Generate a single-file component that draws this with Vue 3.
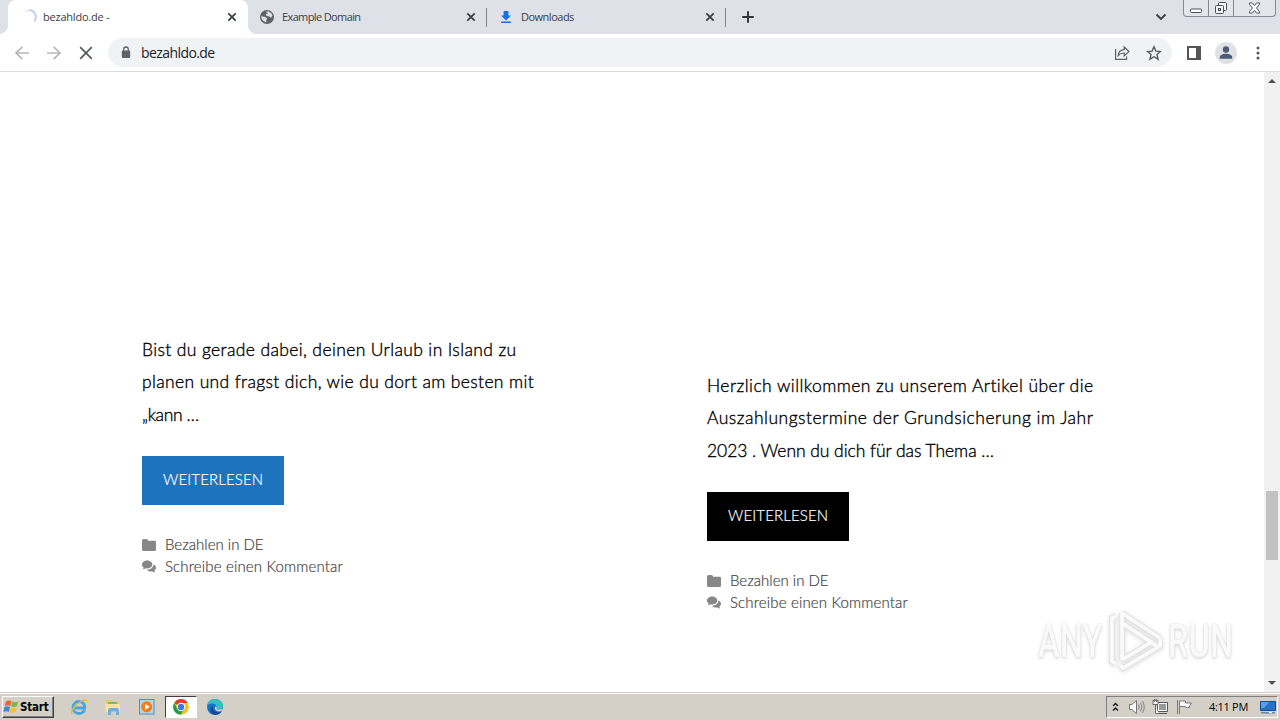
<template>
  <div class="screen">
    <header class="tabstrip">
      <div class="tab active">
        <svg class="favicon" viewBox="0 0 16 16">
          <path d="M8 1.200a6.800 6.800 0 0 1 5.200 11.200" fill="none" stroke="#b9ccf5" stroke-width="1.800" />
          <path d="M8 1.200a6.800 6.800 0 0 0-4 1.300" fill="none" stroke="#e4ebfa" stroke-width="1.500" />
        </svg>
        <span class="tab-title loading">bezahldo.de -</span>
        <svg class="close" viewBox="0 0 10 10"><path d="M1.300 1.300l7.400 7.400M8.700 1.300L1.300 8.700" /></svg>
      </div>
      <div class="tab">
        <svg class="favicon globe" viewBox="0 0 16 16">
          <circle cx="8" cy="8" r="7" fill="#5f6368" />
          <path d="M2.200 7.300l4.200.7 1.800 1.700-1 1.300.2 2.200C4.400 13 2.300 10.600 2.200 7.300zM6.500 2.800l3.300-.4 2.600 1.800 1 2.500-1.500 2-1.500-1.200-3.200-.7-.2-1.700 2-.7z" fill="#dee1e8" />
        </svg>
        <span class="tab-title example">Example Domain</span>
        <svg class="close" viewBox="0 0 10 10"><path d="M1.300 1.300l7.400 7.400M8.700 1.300L1.300 8.700" /></svg>
      </div>
      <div class="tab bordered">
        <svg class="favicon globe" viewBox="0 0 16 16">
          <path d="M5.600 2h4.800v4.500H13L8 11.500 3 6.500h2.600zM3.200 12.500h9.600V14H3.200z" fill="#1a6fe0" />
        </svg>
        <span class="tab-title downloads">Downloads</span>
        <svg class="close" viewBox="0 0 10 10"><path d="M1.300 1.300l7.400 7.400M8.700 1.300L1.300 8.700" /></svg>
      </div>
      <div class="new-tab">
        <svg width="14" height="14" viewBox="0 0 14 14"><path d="M7 1.200v11.600M1.200 7h11.600" stroke="#30333a" stroke-width="1.900" /></svg>
      </div>
      <svg class="tab-search" width="12" height="8" viewBox="0 0 12 8"><path d="M1.500 1.500L6 6l4.500-4.500" fill="none" stroke="#3c4043" stroke-width="1.900" /></svg>
      <div class="window-buttons">
        <span class="min"><svg width="14" height="6" viewBox="0 0 14 6"><rect x="1.500" y="1" width="11" height="3.500" rx="1" fill="#fff" stroke="#4c5058" /></svg></span>
        <span class="max">
          <svg width="14" height="14" viewBox="0 0 14 14" fill="#f3f4f7" stroke="#4c5058">
            <rect x="4.500" y="1.500" width="8" height="8" rx="1" />
            <rect x="1.500" y="4.500" width="8" height="8" rx="1" />
            <rect x="4.500" y="7.500" width="2" height="2" />
          </svg>
        </span>
        <span class="shut">
          <svg width="13" height="12" viewBox="0 0 13 12"><path d="M1.500 1h3l2 2.500L8.500 1h3v1.500L8.500 6l3 3.500V11h-3l-2-2.500L4.500 11h-3V9.500l3-3.500-3-3.500z" fill="#fff" stroke="#4c5058" /></svg>
        </span>
      </div>
    </header>

    <div class="toolbar">
      <div class="nav-buttons">
        <svg width="16" height="16" viewBox="0 0 16 16"><path d="M15 8H2.500M8.300 1.800L2 8l6.300 6.200" stroke="#b4b6b9" /></svg>
        <svg width="16" height="16" viewBox="0 0 16 16"><path d="M1 8h12.500M7.700 1.800L14 8l-6.300 6.200" stroke="#b4b6b9" /></svg>
        <svg width="16" height="16" viewBox="0 0 16 16"><path d="M2.200 2.200l11.600 11.600M13.800 2.200L2.200 13.800" stroke="#55585c" /></svg>
      </div>
      <div class="omnibox">
        <svg class="lock" width="10" height="13" viewBox="0 0 10 13">
          <rect x="0.800" y="4.500" width="8.400" height="7.500" rx="1" fill="#5f6368" />
          <path d="M2.700 5V3.300a2.300 2.300 0 0 1 4.600 0V5" fill="none" stroke="#5f6368" stroke-width="1.300" />
        </svg>
        <span class="url">bezahldo.de</span>
        <svg class="share" width="16" height="16" viewBox="0 0 16 16" fill="none" stroke="#5f6368" stroke-width="1.200">
          <path d="M1.600 4v10.400h11v-3" />
          <path d="M4.200 10.500c.3-3.700 2.500-5.600 6-5.800V2L15 6.500l-4.800 4.300V8C7.600 7.900 5.700 8.700 4.200 10.500z" />
        </svg>
        <svg class="star" width="16" height="16" viewBox="0 0 16 16"><path d="M8 1.800l1.900 4.300 4.600.4-3.500 3.100 1.100 4.600L8 11.700l-4.100 2.500L5 9.600 1.500 6.500l4.600-.4z" fill="none" stroke="#55595e" stroke-width="1.400" /></svg>
      </div>
      <svg class="panel" width="14" height="14" viewBox="0 0 14 14"><path d="M0 0h14v14H0zM2 2v10h7V2z" fill="#55555a" fill-rule="evenodd" /></svg>
      <svg class="avatar" width="22" height="22" viewBox="0 0 22 22">
        <circle cx="11" cy="11" r="11" fill="#dfe1e5" />
        <circle cx="11" cy="7.500" r="3.200" fill="#4c5a75" />
        <path d="M4.800 16.800v-1.500c0-2.200 3-3.500 6.200-3.500s6.200 1.300 6.200 3.500v1.500z" fill="#4c5a75" />
      </svg>
      <svg class="dots" width="4" height="14" viewBox="0 0 4 14" fill="#55585c"><circle cx="2" cy="2" r="1.500" /><circle cx="2" cy="7" r="1.500" /><circle cx="2" cy="12" r="1.500" /></svg>
    </div>

    <main class="viewport">
      <div class="page">
        <article v-for="post in posts" :key="post.id" class="post" :class="post.id">
          <p class="excerpt">
            <span v-for="line in post.lines" :key="line.text" class="line" :style="{ letterSpacing: line.spacing + 'px' }">{{ line.text }}</span>
          </p>
          <a class="read-more">WEITERLESEN</a>
          <div class="meta">
            <svg width="14" height="12" viewBox="0 0 14 12"><path d="M0 1.500Q0 0 1.500 0h3Q6 0 6 1.700h6.500Q14 1.700 14 3v7.500q0 1.500-1.500 1.500h-11Q0 12 0 10.500z" /></svg>
            <span class="category">Bezahlen in DE</span>
          </div>
          <div class="meta">
            <svg width="14" height="14" viewBox="0 0 14 14">
              <path d="M5.200.5C8.100.5 10.300 2.200 10.300 4.500S8 8.400 5.200 8.400l-1.500-.2C2.800 9 1.600 9.300.7 9.300c.6-.5 1-1.100 1-1.800C.6 6.800 0 5.700 0 4.500 0 2.200 2.300.5 5.200.5z" />
              <path d="M11.300 4.500C13 5.100 14 6.300 14 7.800c0 1.200-.6 2.100-1.600 2.800 0 .9.400 1.500 1 2-1 0-2.100-.4-3-1.100-2.200.3-4.400-.4-5.400-1.800 3.500 0 6.300-2 6.300-5.200z" />
            </svg>
            <span class="comment">Schreibe einen Kommentar</span>
          </div>
        </article>
        <div class="watermark">
          <span class="any">ANY</span>
          <svg width="60" height="64" viewBox="0 0 60 64" fill="none">
            <path d="M9 8L5 10V53l4 3M15 5v47M15 5l38 25M15 15l35 23M53 30v8L16 60l-3-3M15 52l31-19" stroke="#e3e3e3" stroke-width="6" />
            <path d="M9 8L5 10V53l4 3M15 5v47M15 5l38 25M15 15l35 23M53 30v8L16 60l-3-3M15 52l31-19" stroke="#fbfbfb" stroke-width="3.500" />
          </svg>
          <span class="run">RUN</span>
        </div>
      </div>
      <div class="scrollbar">
        <i class="arrow up"></i>
        <i class="thumb"></i>
        <i class="arrow down"></i>
      </div>
    </main>

    <footer class="taskbar">
      <button class="start">
        <svg width="17" height="16" viewBox="0 0 17 16">
          <path d="M3 2.500C5 1 7 1.200 8.500 2L7.300 7C5.500 6 4 6 1.800 7z" fill="#e8642c" />
          <path d="M9.300 2.500c2 1 4 .8 6-.2L14 7.200c-2 1-4 1-6 0z" fill="#7ab648" />
          <path d="M1.500 8C3.500 7 5.300 7 7 8l-1.200 5C4 12 2.200 12 .3 13z" fill="#3f86d0" />
          <path d="M7.800 8.300c2 1 4 .8 6-.1L12.500 13c-2 1-4 1-6 .1z" fill="#f6c02e" />
        </svg>
        Start
      </button>
      <div class="launchers">
        <span class="app">
          <svg viewBox="0 0 18 18">
            <path d="M14.500 12c-1 2.200-3 3.500-5.500 3.500-3.500 0-6-2.500-6-6s2.500-6 6-6 6 2.500 5.700 6.500H5" fill="none" stroke="#45a6df" stroke-width="2.800" />
            <path d="M2 16C0 13.500 5 7 11 3.500c3-1.800 5.500-2.200 5.500-.5" fill="none" stroke="#e8b93a" stroke-width="1.400" />
          </svg>
        </span>
        <span class="app">
          <svg viewBox="0 0 18 18">
            <path d="M2 2h5l1 1.500h7V14H2z" fill="#e8ca68" />
            <path d="M4 4h9v3H4z" fill="#71bc75" />
            <path d="M1.500 6h14.500v8H1.500z" fill="#f7e49a" />
            <path d="M4 17v-4.500q0-2.500 2.500-2.500h6q2.500 0 2.500 2.500V17h-3v-3.500H7V17z" fill="#6dafd6" />
          </svg>
        </span>
        <span class="app">
          <svg viewBox="0 0 18 18">
            <rect x="1.500" y="1.500" width="14.500" height="14.500" fill="#b5d4ec" stroke="#528dc4" />
            <circle cx="8.700" cy="8.800" r="5.500" fill="#ef8019" />
            <path d="M7 5.700v6.200l4.700-3.100z" fill="#fff" />
          </svg>
        </span>
        <span class="app pressed">
          <svg viewBox="0 0 18 18">
            <circle cx="9" cy="9" r="7.800" fill="#fbc116" />
            <path d="M9 9L2.200 5.100A7.800 7.800 0 0 1 15.800 5H9z" fill="#e33b2e" />
            <path d="M9 9l-3.500 2L2.200 5.100A7.800 7.800 0 0 0 8.500 16.800L12.500 11z" fill="#269b4b" />
            <circle cx="9" cy="9" r="4.200" fill="#fff" />
            <circle cx="9" cy="9" r="3.200" fill="#3c79df" />
          </svg>
        </span>
        <span class="app">
          <svg viewBox="0 0 18 18">
            <circle cx="9" cy="9" r="8" fill="#1673c5" />
            <path d="M1.200 8C2 3.500 5 1 9 1c4.500 0 8 3 8 6.500 0 2.600-2 4-4.200 4-2 0-2.800-.8-2-1.800C11 7 8.500 5.500 6 5.500c-2.300 0-4.200 1-4.800 2.500z" fill="#35bfc0" />
            <path d="M7.500 8c-2 3 1 6.500 4.500 6.200 1.500 0 2.800-.5 3.800-1.100C14 16.500 9.500 18 6 15.500 3 13 4.500 9 7.500 8z" fill="#104b95" />
            <path d="M10.800 9.700c-.8 1 0 1.800 2 1.800 1.200 0 2.300-.3 3.800-.8-.2 1.200-.6 1.800-1.100 2.400-3 1.300-6.500-.2-6.800-3.100C8.700 8.500 10.500 7.500 10.800 9.700z" fill="#d4d0c8" />
          </svg>
        </span>
      </div>
      <div class="tray">
        <svg class="chevrons" width="7" height="10" viewBox="0 0 7 10"><path d="M1 4l2.500-2.500L6 4M1 8.500L3.500 6 6 8.500" fill="none" stroke="#111" stroke-width="1.400" /></svg>
        <svg class="sound" width="17" height="16" viewBox="0 0 17 16"><path d="M1.500 5.500H4l4.500-4v13L4 10.500H1.500z" fill="#fff" stroke="#777" /><path d="M10.500 5.500q1.500 2.500 0 5M12.500 3.500q3 4.500 0 9M14.500 2q3.500 6 0 12" fill="none" stroke="#868686" /></svg>
        <svg class="network" width="17" height="16" viewBox="0 0 17 16"><path d="M5.500 3.500h10v9h-10zM6 14.500h9" fill="#fff" stroke="#575757" /><path d="M7 5h7v6H7z" fill="#999" /><path d="M1 1.500h5v4H1zM2.500 0v3M4.500 0v3M3.500 6v8.500h3" fill="#fff" stroke="#666" /></svg>
        <svg class="flag" width="17" height="16" viewBox="0 0 17 16"><path d="M1.500 1v14M3.500 2v13" stroke="#777" /><path d="M3.500 2h6v2h6l-2.500 3.500 1 .5q-3 2-5-.5h-5.500z" fill="#fff" stroke="#777" /></svg>
        <span class="clock">4:11 PM</span>
        <svg class="desktop" width="16" height="14" viewBox="0 0 16 14"><path d="M.5 1.500h15v9H.5z" fill="#2673c6" stroke="#174c8c" /><path d="M1 2h8L4 8H1z" fill="#58a1e2" /><path d="M1 12h14v1.500H1z" fill="#6587ad" /><path d="M9 12h3v1H9z" fill="#fff" /></svg>
      </div>
    </footer>
  </div>
</template>

<script setup>
const posts = [
  {
    id: 'island',
    lines: [
      { text: 'Bist du gerade dabei, deinen Urlaub in Island zu', spacing: 0.37 },
      { text: 'planen und fragst dich, wie du dort am besten mit', spacing: 0.36 },
      { text: '„kann …', spacing: -0.4 }
    ]
  },
  {
    id: 'termine',
    lines: [
      { text: 'Herzlich willkommen zu unserem Artikel über die', spacing: 0.44 },
      { text: 'Auszahlungstermine der Grundsicherung im Jahr', spacing: 0.49 },
      { text: '2023 . Wenn du dich für das Thema …', spacing: -0.05 }
    ]
  }
]
</script>

<style>
body {
  margin: 0;
  overflow: hidden;
}
</style>

<style scoped>
.screen {
  width: 1280px;
  height: 720px;
  display: flex;
  flex-direction: column;
  overflow: hidden;
  background: #fff;
  font-family: 'Open Sans', 'Noto Sans', sans-serif;
}

svg {
  display: block;
  flex: none;
}

.tabstrip {
  height: 34px;
  display: flex;
  flex: none;
  padding-left: 8px;
  background: #dee1e8;
  position: relative;
}

.tab {
  width: 239px;
  height: 34px;
  box-sizing: border-box;
  display: flex;
  align-items: center;
  padding: 0 11px 0 12px;
  position: relative;
}

.tab.active {
  width: 240px;
  padding-left: 13px;
  background: #fff;
  border-radius: 8px 8px 0 0;
}

.tab.active::before,
.tab.active::after {
  content: '';
  position: absolute;
  bottom: 0;
  width: 8px;
  height: 8px;
}

.tab.active::before {
  left: -8px;
  background: radial-gradient(circle at 0 0, #dee1e8 7.5px, #fff 8px);
}

.tab.active::after {
  right: -8px;
  background: radial-gradient(circle at 100% 0, #dee1e8 7.5px, #fff 8px);
}

.tab.bordered::before,
.tab.bordered::after {
  content: '';
  position: absolute;
  top: 8px;
  width: 1px;
  height: 19px;
  background: #80858c;
}

.tab.bordered::before {
  left: -1px;
}

.tab.bordered::after {
  right: 0;
}

.favicon {
  width: 16px;
  height: 16px;
}

.favicon.globe {
  margin: 0 1px 0 -1px;
}

.tab-title {
  margin-left: 6px;
  flex: 1;
  font-size: 11px;
  line-height: 16px;
  color: #3c4043;
  white-space: nowrap;
}

.loading {
  letter-spacing: -0.22px;
}

.example {
  letter-spacing: -0.62px;
}

.downloads {
  letter-spacing: -0.5px;
}

.close {
  width: 10px;
  height: 10px;
}

.close path {
  stroke: #3c4043;
  stroke-width: 1.8;
}

.new-tab {
  margin: 10px 0 0 15px;
}

.tab-search {
  margin: 13px 0 0 auto;
}

.window-buttons {
  display: flex;
  width: 91px;
  height: 16px;
  margin: 0 4px 0 16px;
  border: 1px solid #858a94;
  border-top: 0;
  border-radius: 0 0 4px 4px;
  background: #e4e6eb;
}

.window-buttons span {
  display: flex;
  justify-content: center;
  align-items: center;
}

.min {
  width: 24px;
}

.min svg {
  margin-top: 5px;
}

.max {
  width: 24px;
  border-left: 1px solid #858a94;
  border-right: 1px solid #858a94;
}

.shut {
  flex: 1;
}

.toolbar {
  height: 37px;
  flex: none;
  display: flex;
  align-items: center;
  border-bottom: 1px solid #d9dbde;
}

.nav-buttons {
  display: flex;
  gap: 16px;
  margin-left: 14px;
}

.nav-buttons path {
  fill: none;
  stroke-width: 1.7;
}

.omnibox {
  width: 1064px;
  height: 29px;
  margin-left: 14px;
  box-sizing: border-box;
  padding: 0 10px 0 13px;
  display: flex;
  align-items: center;
  border-radius: 15px;
  background: #f0f3f5;
}

.lock {
  margin-top: -1px;
}

.url {
  margin-left: 10px;
  flex: 1;
  font-size: 14px;
  line-height: 18px;
  letter-spacing: -0.58px;
  color: #202124;
}

.star {
  margin-left: 16px;
}

.panel {
  margin-left: 15px;
}

.avatar {
  margin-left: 14px;
}

.dots {
  margin-left: 19px;
}

.viewport {
  height: 620px;
  flex: none;
  display: flex;
}

.page {
  width: 1264px;
  display: flex;
  position: relative;
}

.post {
  width: 423px;
  margin-left: 142px;
  padding-top: 262px;
}

.post.termine {
  padding-top: 298px;
}

.excerpt {
  margin: 0 0 25px;
  font-family: 'Lato', sans-serif;
  font-size: 17.5px;
  font-weight: 300;
  line-height: 32.4px;
  color: #000;
  -webkit-text-stroke: 0.35px #000;
}

.line {
  display: block;
  width: max-content;
}

.read-more {
  display: block;
  width: 142px;
  height: 49px;
  box-sizing: border-box;
  margin-bottom: 29px;
  padding-left: 21px;
  background: #1e73be;
  color: #fff;
  font-family: 'Lato', sans-serif;
  font-size: 15px;
  font-weight: 300;
  letter-spacing: 0.15px;
  line-height: 47px;
  -webkit-text-stroke: 0.2px #fff;
}

.termine .read-more {
  background: #000;
}

.meta {
  height: 22px;
  display: flex;
  align-items: center;
  gap: 9px;
  color: #444;
  font-family: 'Lato', sans-serif;
  font-size: 15px;
  font-weight: 300;
  line-height: 20px;
}

.meta span {
  margin-top: -2px;
  -webkit-text-stroke: 0.2px #444;
}

.meta svg {
  fill: #878787;
}

.comment {
  letter-spacing: 0.16px;
}

.watermark {
  position: absolute;
  left: 1038px;
  top: 537px;
  display: flex;
  align-items: center;
  color: #fafafa;
  font-family: 'Roboto', sans-serif;
  font-size: 46px;
  font-weight: 500;
  line-height: 64px;
  text-shadow: 0 0 2px #ccc, 0 2px 4px #ddd;
}

.watermark svg {
  width: 60px;
  margin-top: -2px;
  filter: drop-shadow(0 1px 2px #ddd);
}

.any,
.run {
  width: 69px;
  transform: scaleX(0.71);
  transform-origin: left;
}

.run {
  margin-left: 1px;
}

.scrollbar {
  width: 16px;
  background: #f1f1f1;
  position: relative;
}

.arrow {
  position: absolute;
  left: 4px;
  border: 4px solid transparent;
}

.arrow.up {
  top: 3px;
  border-bottom-color: #505050;
}

.arrow.down {
  bottom: 3px;
  border-top-color: #505050;
}

.thumb {
  position: absolute;
  left: 2px;
  top: 419px;
  width: 12px;
  height: 69px;
  background: #c1c1c1;
}

.taskbar {
  height: 28px;
  box-sizing: border-box;
  display: flex;
  align-items: center;
  border-top: 1px solid #d4d0c8;
  box-shadow: inset 0 1px #fff;
  background: #d4d0c8;
}

.start {
  width: 52px;
  height: 22px;
  box-sizing: border-box;
  margin: 1px 0 0 2px;
  padding: 0 2px 0 0;
  display: flex;
  align-items: center;
  border: 1px solid;
  border-color: #fff #404040 #404040 #fff;
  box-shadow: inset -1px -1px #808080;
  background: #d4d0c8;
  color: #000;
  font: bold 11.5px 'DejaVu Sans Condensed', 'DejaVu Sans', sans-serif;
  letter-spacing: -0.2px;
}

.launchers {
  display: flex;
  margin-left: 9px;
  gap: 2px;
}

.app {
  width: 32px;
  height: 22px;
  box-sizing: border-box;
  display: flex;
  align-items: center;
  justify-content: center;
}

.app svg {
  width: 18px;
  height: 18px;
}

.app.pressed {
  border: 1px solid;
  border-color: #404040 #fff #fff #404040;
  background: #fff;
}

.tray {
  width: 172px;
  height: 22px;
  box-sizing: border-box;
  margin: 0 2px 0 auto;
  padding-left: 5px;
  display: flex;
  align-items: center;
  border: 1px solid;
  border-color: #808080 #fff #fff #808080;
}

.sound {
  margin-left: 9px;
}

.network {
  margin-left: 7px;
}

.flag {
  margin-left: 7px;
}

.clock {
  width: 43px;
  margin-left: 16px;
  font-size: 11px;
  line-height: 14px;
  letter-spacing: -0.3px;
  color: #000;
  white-space: nowrap;
}

.desktop {
  margin-left: 8px;
}
</style>
